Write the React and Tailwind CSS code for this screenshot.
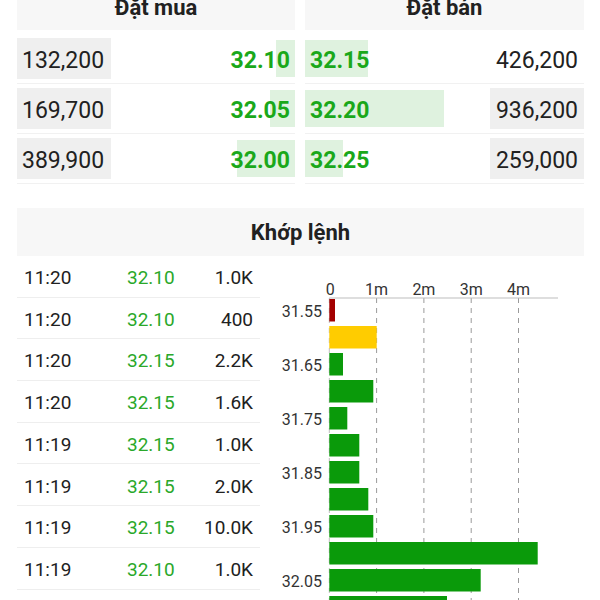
import React from 'react';

const buys = [
  { vol: '132,200', price: '32.10', bar: 19 },
  { vol: '169,700', price: '32.05', bar: 25 },
  { vol: '389,900', price: '32.00', bar: 58 },
];

const sells = [
  { vol: '426,200', price: '32.15', bar: 63, shade: false },
  { vol: '936,200', price: '32.20', bar: 139, shade: true },
  { vol: '259,000', price: '32.25', bar: 38, shade: true },
];

const trades = [
  ['11:20', '32.10', '1.0K'],
  ['11:20', '32.10', '400'],
  ['11:20', '32.15', '2.2K'],
  ['11:20', '32.15', '1.6K'],
  ['11:19', '32.15', '1.0K'],
  ['11:19', '32.15', '2.0K'],
  ['11:19', '32.15', '10.0K'],
  ['11:19', '32.10', '1.0K'],
];

// volume per price step, in px from the zero line (1m = 47.3px)
const bars = [
  { w: 5.7, c: '#a30000' },
  { w: 47.4, c: '#ffcc00' },
  { w: 13.7 },
  { w: 44 },
  { w: 18 },
  { w: 30 },
  { w: 30 },
  { w: 39 },
  { w: 44 },
  { w: 208.4 },
  { w: 151.4 },
  { w: 117.7 },
];

const priceLabels = ['31.55', '31.65', '31.75', '31.85', '31.95', '32.05'];

function SideHeader({ title }) {
  return (
    <div className="h-[46px] bg-[#f7f7f7] flex items-center justify-center text-[22px] font-bold text-[#212121]">
      {title}
    </div>
  );
}

function BuySide() {
  return (
    <div className="w-[278px]">
      <SideHeader title="Đặt mua" />
      <div className="mt-[4px]">
        {buys.map((r) => (
          <div key={r.price} className="h-[50px] pt-[4px] flex items-start border-b border-[#f1f1f1]">
            <div className="w-[94px] h-[41px] bg-[#efefef] flex items-center pt-[6px] pl-[5px] text-[23px] text-[#212121]">
              {r.vol}
            </div>
            <div className="relative flex-1 h-[41px] flex items-center justify-end pt-[6px] pr-[5px]">
              <div className="absolute right-0 top-[2px] bottom-[2px] bg-[#dff2df]" style={{ width: r.bar }} />
              <span className="relative text-[23px] font-bold text-[#1aa81a]">{r.price}</span>
            </div>
          </div>
        ))}
      </div>
    </div>
  );
}

function SellSide() {
  return (
    <div className="w-[279px]">
      <SideHeader title="Đặt bán" />
      <div className="mt-[4px]">
        {sells.map((r) => (
          <div key={r.price} className="h-[50px] pt-[4px] flex items-start border-b border-[#f1f1f1]">
            <div className="relative flex-1 h-[41px] flex items-center pt-[6px] pl-[5px]">
              <div className="absolute left-0 top-[2px] bottom-[2px] bg-[#dff2df]" style={{ width: r.bar }} />
              <span className="relative text-[23px] font-bold text-[#1aa81a]">{r.price}</span>
            </div>
            <div
              className={
                'w-[94px] h-[41px] flex items-center justify-end pt-[6px] pr-[6px] text-[23px] text-[#212121] ' +
                (r.shade ? 'bg-[#efefef]' : '')
              }
            >
              {r.vol}
            </div>
          </div>
        ))}
      </div>
    </div>
  );
}

function VolumeChart() {
  const x0 = 69.3;
  const step = 47.3;
  const grid = [1, 2, 3, 4];
  return (
    <svg width="324" height="344" className="block shrink-0">
      {grid.map((g) => (
        <line
          key={g}
          x1={x0 + g * step}
          x2={x0 + g * step}
          y1={42}
          y2={344}
          stroke="#9a9a9a"
          strokeWidth="1"
          strokeDasharray="5 5"
        />
      ))}
      <line x1={x0} x2={x0} y1={42} y2={344} stroke="#bdbdbd" strokeWidth="1" strokeDasharray="5 5" />
      <line x1={x0} x2={298} y1={42} y2={42} stroke="#bdbdbd" strokeWidth="1" />
      {[0, 1, 2, 3, 4].map((g) => (
        <text
          key={g}
          x={x0 + g * step + (g === 0 ? 1 : 0)}
          y={39}
          textAnchor="middle"
          fontSize="16"
          fill="#333"
          fontFamily="Roboto, sans-serif"
        >
          {g === 0 ? '0' : g + 'm'}
        </text>
      ))}
      {bars.map((b, i) => (
        <rect key={i} x={x0} y={43 + i * 27} width={b.w} height={22.5} fill={b.c || '#0a9a0a'} />
      ))}
      {priceLabels.map((p, i) => (
        <text
          key={p}
          x={62}
          y={43 + i * 54 + 11.5 + 6.5}
          textAnchor="end"
          fontSize="16"
          fill="#333"
          fontFamily="Roboto, sans-serif"
        >
          {p}
        </text>
      ))}
    </svg>
  );
}

export default function App() {
  return (
    <div className="w-[600px] h-[600px] overflow-hidden bg-white font-['Roboto',sans-serif]">
      <div className="-mt-[16px]">
        <div className="flex gap-[10px] pl-[17px] pr-[16px]">
          <BuySide />
          <SellSide />
        </div>

        <div className="ml-[17px] mr-[16px] mt-[24px]">
          <div className="h-[48px] bg-[#f7f7f7] flex items-center justify-center text-[22px] font-bold text-[#212121]">
            Khớp lệnh
          </div>
          <div className="flex">
            <div className="w-[243px] shrink-0">
              {trades.map((t, i) => (
                <div key={i} className="h-[41.7px] pt-[4px] flex items-center border-b border-[#eeeeee] text-[19px]">
                  <span className="w-[110px] pl-[7px] text-[#212121]">{t[0]}</span>
                  <span className="flex-1 text-[#2aa82a]">{t[1]}</span>
                  <span className="pr-[7px] text-right text-[#212121]">{t[2]}</span>
                </div>
              ))}
            </div>
            <VolumeChart />
          </div>
        </div>
      </div>
    </div>
  );
}
